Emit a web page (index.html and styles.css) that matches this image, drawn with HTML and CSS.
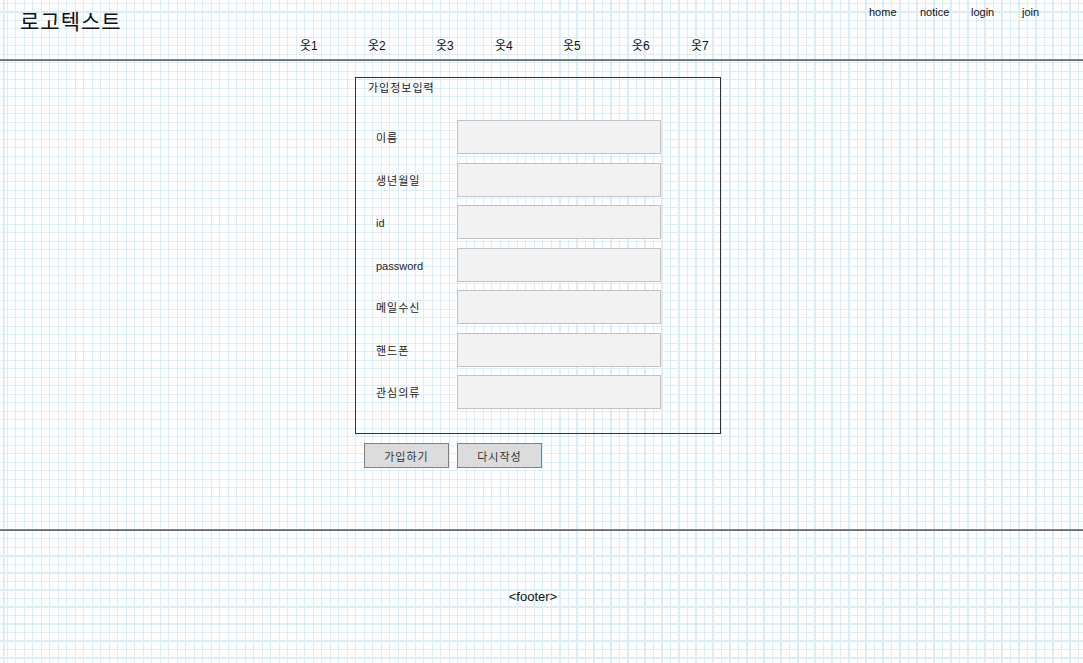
FILE: index.html
```html
<!DOCTYPE html>
<html lang="ko">
<head>
<meta charset="utf-8">
<title>회원가입</title>
<link rel="stylesheet" href="styles.css">
</head>
<body>
<div class="page">
  <header class="header">
    <div class="top">
      <div class="logo">로고텍스트</div>
      <ul class="util">
        <li>home</li>
        <li>notice</li>
        <li>login</li>
        <li>join</li>
      </ul>
    </div>
    <ul class="nav">
      <li class="w68">옷1</li>
      <li class="w68">옷2</li>
      <li class="w59">옷3</li>
      <li class="w68">옷4</li>
      <li class="w69">옷5</li>
      <li class="w59">옷6</li>
      <li class="w59">옷7</li>
    </ul>
  </header>
  <div class="rule"></div>
  <main class="main">
    <form class="form">
      <fieldset class="box">
        <div class="legend">가입정보입력</div>
        <div class="rows">
          <div class="row"><label class="label ko">이름</label><input class="field" type="text"></div>
          <div class="row"><label class="label ko">생년월일</label><input class="field" type="text"></div>
          <div class="row"><label class="label">id</label><input class="field" type="text"></div>
          <div class="row"><label class="label">password</label><input class="field" type="password"></div>
          <div class="row"><label class="label ko">메일수신</label><input class="field" type="text"></div>
          <div class="row"><label class="label ko">핸드폰</label><input class="field" type="text"></div>
          <div class="row"><label class="label ko">관심의류</label><input class="field" type="text"></div>
        </div>
      </fieldset>
      <div class="buttons">
        <button class="btn" type="submit">가입하기</button>
        <button class="btn" type="reset">다시작성</button>
      </div>
    </form>
  </main>
  <div class="rule footer-rule"></div>
  <footer class="footer">&lt;footer&gt;</footer>
</div>
</body>
</html>
```
FILE: styles.css
```css
html, body {
  margin: 0;
  padding: 0;
}
body {
  font-family: "Liberation Sans", "Noto Sans CJK KR", sans-serif;
  color: #111;
  background-color: #fff;
  background-image:
    repeating-linear-gradient(to right, #dcedf8 0 1px, transparent 1px 8.5px),
    repeating-linear-gradient(to bottom, #dcedf8 0 1px, transparent 1px 8.5px);
  background-position: 7px 0, 0 3px;
  min-height: 663px;
}
.page {
  width: 1083px;
}
ul {
  list-style: none;
  margin: 0;
  padding: 0;
}
.header {
  height: 59px;
}
.top {
  display: flex;
  height: 34px;
}
.logo {
  padding: 10px 0 0 20px;
  font-size: 21px;
  line-height: 24px;
  letter-spacing: 1px;
  color: #111;
}
.util {
  display: flex;
  margin-left: auto;
  padding: 6px 10px 0 0;
  font-size: 11px;
  line-height: 13px;
}
.util li {
  width: 51px;
}
.nav {
  display: flex;
  padding: 5px 0 0 300px;
  font-size: 12px;
  line-height: 14px;
}
.w68 { width: 68px; }
.w69 { width: 69px; }
.w59 { width: 59px; }
.rule {
  height: 2px;
  background: linear-gradient(#8a8a8a, #666);
}
.main {
  padding: 16px 0 0 355px;
}
.form {
  margin: 0;
}
.box {
  box-sizing: border-box;
  width: 366px;
  height: 357px;
  margin: 0;
  padding: 0;
  border: 1px solid #333;
}
.legend {
  padding: 4px 0 0 12px;
  font-size: 11px;
  line-height: 13px;
  letter-spacing: 1px;
  color: #222;
}
.rows {
  display: flex;
  flex-direction: column;
  gap: 8.5px;
  margin-top: 25px;
}
.row {
  display: flex;
  align-items: center;
  padding-left: 20px;
}
.label {
  width: 81px;
  padding-top: 3px;
  font-size: 11px;
  line-height: 13px;
  color: #222;
}
.ko {
  letter-spacing: 1px;
}
.field {
  box-sizing: border-box;
  width: 204px;
  height: 34px;
  margin: 0;
  padding: 0;
  border: 1px solid #c2c2c2;
  background: #f2f2f2;
}
.buttons {
  display: flex;
  gap: 8px;
  padding: 9px 0 0 9px;
}
.btn {
  box-sizing: border-box;
  width: 85px;
  height: 25px;
  margin: 0;
  padding: 0;
  border: 1px solid #808080;
  background: #dcdcdc;
  font-family: "Liberation Sans", "Noto Sans CJK KR", sans-serif;
  font-size: 11px;
  letter-spacing: 1px;
  color: #333;
}
.footer-rule {
  margin-top: 61px;
}
.footer {
  padding-top: 58px;
  padding-right: 17px;
  text-align: center;
  font-size: 13px;
  line-height: 15px;
  color: #111;
}
```
